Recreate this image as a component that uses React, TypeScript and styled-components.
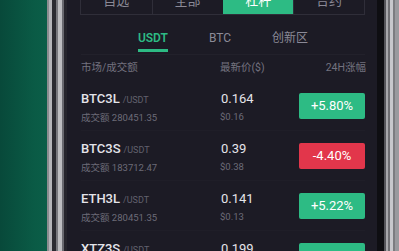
import React from "react";
import styled, { createGlobalStyle } from "styled-components";

const GlobalStyle = createGlobalStyle`
  html, body {
    margin: 0;
    padding: 0;
    background: #1c1b25;
    overflow: hidden;
  }
  body {
    font-family: Roboto, "Noto Sans CJK SC", sans-serif;
  }
`;

const Stage = styled.div`
  display: flex;
  width: 399px;
  height: 251px;
  overflow: hidden;
`;

const Backdrop = styled.div`
  flex: none;
  width: 47px;
  background: linear-gradient(to right, #08493a 0%, #0a5a45 70%, #0b5e48 100%);
`;

const LeftBezel = styled.div`
  flex: none;
  width: 20px;
  background: linear-gradient(
    to right,
    #8c8c90 0px, #8c8c90 2px,
    #b4b4b8 2px, #b4b4b8 5px,
    #2a2a30 5px, #2a2a30 9px,
    #77777c 9px, #77777c 11px,
    #bdbdc0 11px, #bdbdc0 15px,
    #6a6a70 15px, #6a6a70 17px,
    #26252c 17px, #26252c 20px
  );
`;

const RightBezel = styled.div`
  flex: none;
  width: 22px;
  background: linear-gradient(
    to right,
    #0e0e12 0px, #0e0e12 7px,
    #55555a 7px, #55555a 9px,
    #a8a8ac 9px, #a8a8ac 11px,
    #6e6e72 11px, #6e6e72 13px,
    #c8c8cc 13px, #c8c8cc 16px,
    #7c7c80 16px, #7c7c80 18px,
    #9a9a9e 18px, #9a9a9e 22px
  );
`;

const Screen = styled.div`
  flex: 1;
  background: #1c1b25;
  padding: 0 12px 0 14px;
  display: flex;
  flex-direction: column;
  overflow: hidden;

  & > * {
    flex: none;
  }
`;

const TabBar = styled.div`
  display: grid;
  grid-template-columns: repeat(4, 1fr);
  height: 30px;
  margin-top: -15px;
  margin-left: -1px;
  border: 1px solid #2f2e39;
  border-top: none;
  box-sizing: border-box;
`;

const Tab = styled.div<{ $active?: boolean }>`
  display: flex;
  align-items: center;
  justify-content: center;
  font-size: 13px;
  color: ${({ $active }) => ($active ? "#ffffff" : "#8b8a97")};
  background: ${({ $active }) => ($active ? "#2dbb84" : "transparent")};
  border-left: 1px solid ${({ $active }) => ($active ? "#2dbb84" : "#2f2e39")};
  &:first-child {
    border-left: none;
  }
`;

const SubTabs = styled.div`
  display: flex;
  justify-content: center;
  gap: 41px;
  height: 40px;
  border-bottom: 1px solid #22212b;
  box-sizing: border-box;
`;

const SubTab = styled.div<{ $active?: boolean }>`
  display: flex;
  flex-direction: column;
  align-items: center;
  justify-content: space-between;
  padding-top: 16px;
  box-sizing: border-box;
  height: 37px;
  font-size: 12px;
  font-weight: ${({ $active }) => ($active ? 600 : 400)};
  color: ${({ $active }) => ($active ? "#2dbb84" : "#8b8a97")};
  line-height: 14px;

  &::after {
    content: "";
    align-self: stretch;
    height: 3px;
    background: ${({ $active }) => ($active ? "#2dbb84" : "transparent")};
  }
`;

const Columns = styled.div`
  display: grid;
  grid-template-columns: 139px 79px 66px;
  align-items: center;
`;

const Header = styled(Columns)`
  height: 26px;
  padding-bottom: 3px;
  box-sizing: border-box;
  font-size: 10.5px;
  color: #73727f;

  span:last-child {
    text-align: right;
    margin-right: -1px;
  }
`;

const Row = styled(Columns)`
  height: 50px;
  border-bottom: 1px solid #1f1e28;
  box-sizing: border-box;
`;

const Cell = styled.div`
  display: flex;
  flex-direction: column;
  gap: 3px;
  padding-top: 3px;
`;

const Main = styled.div`
  font-size: 13px;
  font-weight: 500;
  line-height: 16px;
  color: #e4e4ea;
`;

const Pair = styled.span`
  font-size: 9px;
  font-weight: 400;
  color: #62616e;
  margin-left: 3px;
`;

const Sub = styled.div`
  font-size: 9.5px;
  line-height: 13px;
  color: #6c6b78;
`;

const Price = styled.div`
  font-size: 13px;
  line-height: 16px;
  color: #e4e4ea;
  margin-left: 1px;
`;

const Badge = styled.div<{ $up: boolean }>`
  height: 26px;
  border-radius: 2px;
  display: flex;
  align-items: center;
  justify-content: center;
  font-size: 13px;
  color: #ffffff;
  background: ${({ $up }) => ($up ? "#2dbb84" : "#e2364b")};
`;

const markets = [
  { name: "BTC3L", volume: "280451.35", price: "0.164", usd: "$0.16", change: "+5.80%", up: true },
  { name: "BTC3S", volume: "183712.47", price: "0.39", usd: "$0.38", change: "-4.40%", up: false },
  { name: "ETH3L", volume: "280451.35", price: "0.141", usd: "$0.13", change: "+5.22%", up: true },
  { name: "XTZ3S", volume: "183712.47", price: "0.199", usd: "$0.19", change: "+3.12%", up: true },
];

export default function App() {
  return (
    <Stage>
      <GlobalStyle />
      <Backdrop />
      <LeftBezel />
      <Screen>
        <TabBar>
          <Tab>自选</Tab>
          <Tab>全部</Tab>
          <Tab $active>杠杆</Tab>
          <Tab>合约</Tab>
        </TabBar>
        <SubTabs>
          <SubTab $active>USDT</SubTab>
          <SubTab>BTC</SubTab>
          <SubTab>创新区</SubTab>
        </SubTabs>
        <Header>
          <span>市场/成交额</span>
          <span>最新价($)</span>
          <span>24H涨幅</span>
        </Header>
        {markets.map((m) => (
          <Row key={m.name}>
            <Cell>
              <Main>
                {m.name}
                <Pair>/USDT</Pair>
              </Main>
              <Sub>成交额 {m.volume}</Sub>
            </Cell>
            <Cell>
              <Price>{m.price}</Price>
              <Sub>{m.usd}</Sub>
            </Cell>
            <Badge $up={m.up}>{m.change}</Badge>
          </Row>
        ))}
      </Screen>
      <RightBezel />
    </Stage>
  );
}
